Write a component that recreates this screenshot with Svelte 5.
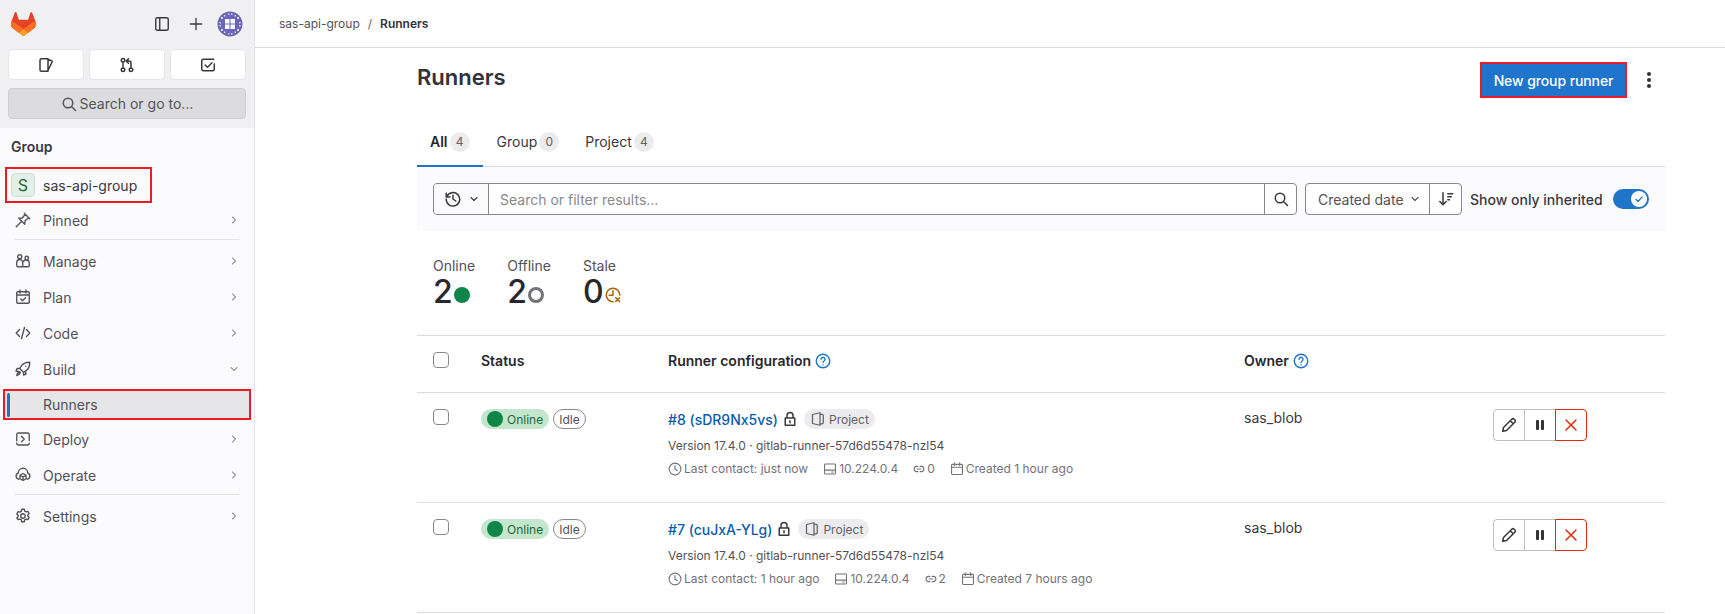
<script lang="ts">
  type Nav = { label: string; icon: string; open?: boolean };

  const icons: Record<string, string> = {
    sidebar: 'M3.25 1.75h9.5a1.5 1.5 0 0 1 1.5 1.5v9.5a1.5 1.5 0 0 1-1.5 1.5h-9.5a1.5 1.5 0 0 1-1.5-1.5v-9.5a1.5 1.5 0 0 1 1.5-1.5ZM5.75 1.75v12.500',
    plus: 'M8 1.500v13M1.500 8h13',
    issues: 'M3.5 1.75H10v12.5H3.5A1.5 1.5 0 0 1 2 12.75v-9.5a1.5 1.5 0 0 1 1.5-1.5ZM10 2.5l3.5 1.2a1 1 0 0 1 .6 1.3L10 13.5',
    mr: 'M5.75 3.25a1.75 1.75 0 1 1-3.5 0 1.75 1.75 0 0 1 3.5 0ZM5.75 12.75a1.75 1.75 0 1 1-3.5 0 1.75 1.75 0 0 1 3.5 0ZM13.75 12.75a1.75 1.75 0 1 1-3.5 0 1.75 1.75 0 0 1 3.5 0ZM4 5v6M12 11V6a2 2 0 0 0-2-2H7.5M9.5 1.75 7.25 4 9.5 6.25',
    todo: 'M14.25 7v5.25a1.5 1.5 0 0 1-1.5 1.5h-9.5a1.5 1.5 0 0 1-1.5-1.5v-8.5a1.5 1.5 0 0 1 1.5-1.5h10.5M5.25 8l2.25 2.25L12 5.75',
    search: 'M11.75 7a4.75 4.75 0 1 1-9.5 0 4.75 4.75 0 0 1 9.5 0ZM10.5 10.5l4 4',
    right: 'm6 4 4 4-4 4',
    down: 'm4 6 4 4 4-4',
    pin: 'M9.25 1.25l5.5 5.5M10.25 2.25 7.25 6 3.75 6.25l6 6 .25-3.5 3.75-3M6.5 9.5l-5.25 5.25',
    manage: 'M6.75 3.75a2 2 0 1 1-4 0 2 2 0 0 1 4 0ZM13.5 5a1.75 1.75 0 1 1-3.5 0 1.75 1.75 0 0 1 3.5 0ZM1.75 9.5a3 3 0 0 1 6 0v3.25a1 1 0 0 1-1 1h-4a1 1 0 0 1-1-1ZM7.75 10a3 3 0 0 1 3.9-2.85 3 3 0 0 1 2.6 2.85v2.75a1 1 0 0 1-1 1H7.75',
    plan: 'M2.75 2.75h10.5a1 1 0 0 1 1 1v9.5a1 1 0 0 1-1 1H2.75a1 1 0 0 1-1-1v-9.5a1 1 0 0 1 1-1ZM5 1v3M11 1v3M1.75 6h12.5M5.75 10l1.75 1.75 3-3',
    code: 'M4.5 4.5 1.25 8l3.25 3.5M11.5 4.5 14.75 8l-3.25 3.5M9.5 2.5l-3 11',
    rocket: 'M14.75 1.25C9.5 1 6.5 3.5 4.75 7.5l3.75 3.75c4-1.75 6.5-4.75 6.25-10ZM4.75 7.5H2L1 10l3 .75M8.500 11.25V14l2.500-1-.75-3M5 11c-1.500.25-3 2.25-3.25 3.500 1.250-.25 3.250-1.750 3.500-3.250M10.750 5.250h.01',
    deploy: 'M1.75 9.75v-6a1.75 1.75 0 0 1 1.75-1.75h9a1.75 1.75 0 0 1 1.75 1.75v5.75M1.75 12a2 2 0 0 0 2 2h8.75a1.75 1.75 0 0 0 1.75-1.75M6.5 5.25 9.25 8 6.5 10.75',
    operate: 'M3.75 12.25A3.25 3.25 0 0 1 3.25 6a4.75 4.75 0 0 1 9.5 0 3.25 3.25 0 0 1-.5 6.25M8 6.5l3 1.75v3.5l-3 1.75-3-1.75v-3.5ZM5 8.25l3 1.75 3-1.75M8 10v3.500',
    settings: 'M10.25 8a2.25 2.25 0 1 1-4.500 0 2.250 2.250 0 0 1 4.500 0ZM6.75 1.25h2.5l.5 1.9 1.3.75 1.9-.5 1.25 2.15-1.4 1.4v1.1l1.4 1.4-1.25 2.150-1.900-.5-1.300.750-.5 1.900h-2.500l-.5-1.900-1.300-.750-1.900.5L1.800 10l1.400-1.400V7.500L1.800 6.100 3.050 3.650l1.900.5 1.300-.75Z',
    history: 'M1.250 2.250V6h3.750M1.750 5.750A6.750 6.750 0 1 1 1.250 8M8 4.250V8l2.750 2',
    sort: 'M5 1.75v12M1.750 10.500 5 13.750l3.250-3.250M9.750 2.750h5M9.750 5.750h3.500M9.750 8.750h1.750',
    help: 'M14.75 8a6.75 6.75 0 1 1-13.500 0 6.750 6.750 0 0 1 13.500 0ZM6 6.250a2 2 0 1 1 3 1.750c-.7.4-1 .8-1 1.500M8 11.750h.01',
    lock: 'M3.250 7h9.500v7.250h-9.500ZM5 7V4.500a3 3 0 0 1 6 0V7M8 9.750v2',
    project: 'M2.500 3.500 10 1.750v12.500L2.500 12.500ZM10 3.250h2a1.250 1.250 0 0 1 1.250 1.250v7A1.250 1.250 0 0 1 12 12.750h-2',
    clock: 'M14.750 8a6.750 6.750 0 1 1-13.500 0 6.750 6.750 0 0 1 13.500 0ZM8 4v4.250l2.500 1.500',
    server: 'M2.750 2.250h10.500a1 1 0 0 1 1 1v9.500a1 1 0 0 1-1 1H2.750a1 1 0 0 1-1-1v-9.500a1 1 0 0 1 1-1ZM1.750 9.250h12.500M10 11.500h1.500',
    chain: 'M6.500 4.500H5a3.500 3.500 0 0 0 0 7h1.500M9.500 4.500H11a3.500 3.500 0 0 1 0 7H9.500M5.500 8h5',
    calendar: 'M2.750 2.750h10.500a1 1 0 0 1 1 1v9.500a1 1 0 0 1-1 1H2.750a1 1 0 0 1-1-1v-9.500a1 1 0 0 1 1-1ZM5 1v3M11 1v3M1.750 6h12.500',
    pencil: 'M10.750 2.250a1.770 1.770 0 0 1 2.500 0l.5.5a1.770 1.770 0 0 1 0 2.500L5.500 13.500l-3.750.750.750-3.750ZM9.250 3.750l3 3',
    close: 'M3 3l10 10M13 3 3 13',
    stale: 'M14.750 8A6.750 6.750 0 1 0 8 14.750M8 3.750v4.500H4.250M10.750 10.750l3.750 3.750M14.500 10.750l-3.750 3.750'
  };

  const navTop: Nav[] = [
    { label: 'Manage', icon: 'manage' },
    { label: 'Plan', icon: 'plan' },
    { label: 'Code', icon: 'code' },
    { label: 'Build', icon: 'rocket', open: true }
  ];
  const navBottom: Nav[] = [
    { label: 'Deploy', icon: 'deploy' },
    { label: 'Operate', icon: 'operate' }
  ];

  const tabs = [
    { label: 'All', count: 4, active: true },
    { label: 'Group', count: 0 },
    { label: 'Project', count: 4 }
  ];

  const runners = [
    { id: '#8 (sDR9Nx5vs)', contact: 'just now', jobs: 0, created: '1 hour ago' },
    { id: '#7 (cuJxA-YLg)', contact: '1 hour ago', jobs: 2, created: '7 hours ago' }
  ];
</script>

{#snippet icon(name: string, size = 16, sw = 1.5)}
  <svg class="ic" width={size} height={size} viewBox="0 0 16 16" fill="none" stroke="currentColor" stroke-width={sw} stroke-linecap="round" stroke-linejoin="round">
    <path d={icons[name]} />
  </svg>
{/snippet}

{#snippet navItem(item: Nav)}
  <div class="nav-item">
    <span class="nav-icon">{@render icon(item.icon, 16, 1.35)}</span>
    <span class="nav-label">{item.label}</span>
    <span class="chev">{@render icon(item.open ? 'down' : 'right', 12, 1.4)}</span>
  </div>
{/snippet}

<div class="page">
  <aside class="sidebar">
    <div class="side-head">
      <div class="logo-row">
        <svg width="25" height="24" viewBox="0 0 25 24">
          <path d="m24.507 9.5-.034-.09L21.082.562a.896.896 0 0 0-1.694.091l-2.29 7.01H7.825L5.535.653a.898.898 0 0 0-1.694-.09L.451 9.411.416 9.5a6.297 6.297 0 0 0 2.09 7.278l.012.01.03.022 5.16 3.867 2.56 1.935 1.554 1.176a1.051 1.051 0 0 0 1.268 0l1.555-1.176 2.56-1.935 5.197-3.89.014-.01A6.297 6.297 0 0 0 24.507 9.5Z" fill="#E24329"/>
          <path d="m24.507 9.5-.034-.09a11.44 11.44 0 0 0-4.56 2.051l-7.447 5.632 4.742 3.584 5.197-3.89.014-.01A6.297 6.297 0 0 0 24.507 9.5Z" fill="#FC6D26"/>
          <path d="m7.707 20.677 2.56 1.935 1.555 1.176a1.051 1.051 0 0 0 1.268 0l1.555-1.176 2.56-1.935-4.743-3.584-4.755 3.584Z" fill="#FCA326"/>
          <path d="M5.01 11.461a11.43 11.43 0 0 0-4.56-2.05L.416 9.5a6.297 6.297 0 0 0 2.09 7.278l.012.01.03.022 5.16 3.867 4.745-3.584-7.444-5.632Z" fill="#FC6D26"/>
        </svg>
        <div class="head-actions">
          {@render icon('sidebar', 16, 1.4)}
          <span class="head-plus">{@render icon('plus', 14, 1.5)}</span>
          <svg width="26" height="26" viewBox="0 0 26 26">
            <circle cx="13" cy="13" r="12.500" fill="#6a67b8"/>
            <path d="M8 8h4.500v4.500H8zM13.500 8H18v4.500h-4.500zM8 13.500h4.500V18H8zM13.500 13.500H18V18h-4.500z" fill="#fff"/>
            <path d="M4 6h2v2H4zM20 6h2v2h-2zM4 18h2v2H4zM20 18h2v2h-2zM11 2.500h1.500V4H11zM14 2.500h1.500V4H14zM11 22h1.500v1.500H11zM14 22h1.500v1.500H14zM2.500 11H4v1.500H2.500zM2.500 14H4v1.500H2.500zM22 11h1.500v1.500H22zM22 14h1.500v1.500H22zM7 4h1.500v1.500H7zM17.500 4H19v1.500h-1.500zM7 20.500h1.500V22H7zM17.500 20.500H19V22h-1.500z" fill="#d9d8ef"/>
          </svg>
        </div>
      </div>
      <div class="quick">
        <button class="quick-btn">{@render icon('issues')}</button>
        <button class="quick-btn">{@render icon('mr')}</button>
        <button class="quick-btn">{@render icon('todo')}</button>
      </div>
      <button class="search-btn">{@render icon('search')}<span>Search or go to…</span></button>
    </div>

    <div class="side-body">
      <div class="ctx-title">Group</div>
      <div class="ctx-box">
        <span class="ctx-avatar">S</span>
        <span>sas-api-group</span>
      </div>
      {@render navItem({ label: 'Pinned', icon: 'pin' })}
      <hr class="side-rule" />
      {#each navTop as item}
        {@render navItem(item)}
      {/each}
      <div class="nav-active"><span class="nav-bar"></span><span>Runners</span></div>
      {#each navBottom as item}
        {@render navItem(item)}
      {/each}
      <hr class="side-rule" />
      {@render navItem({ label: 'Settings', icon: 'settings' })}
    </div>
  </aside>

  <main class="main">
    <header class="topbar">
      <span>sas-api-group</span><span class="sep">/</span><strong>Runners</strong>
    </header>

    <div class="content">
      <div class="title-row">
        <h1>Runners</h1>
        <div class="title-actions">
          <button class="primary">New group runner</button>
          <span class="kebab"><i></i><i></i><i></i></span>
        </div>
      </div>

      <div class="tabs">
        {#each tabs as t}
          <div class="tab" class:active={t.active}>{t.label}<span class="tab-count">{t.count}</span></div>
        {/each}
      </div>

      <div class="filter-band">
        <div class="filter-input">
          <span class="hist">{@render icon('history')}{@render icon('down', 12)}</span>
          <span class="placeholder">Search or filter results...</span>
          <span class="go">{@render icon('search')}</span>
        </div>
        <div class="sorter">
          <span class="sort-field">Created date {@render icon('down', 12)}</span>
          <span class="sort-dir">{@render icon('sort')}</span>
        </div>
        <span class="inherit">Show only inherited</span>
        <span class="toggle"><span class="knob">
          <svg width="10" height="10" viewBox="0 0 16 16" fill="none" stroke="#1f75cb" stroke-width="2" stroke-linecap="round" stroke-linejoin="round"><path d="m3 8.500 3.500 3.500L13 4.500"/></svg>
        </span></span>
      </div>

      <div class="stats">
        <div class="stat"><span class="stat-label">Online</span><span class="stat-val">2<span class="dot-on"></span></span></div>
        <div class="stat"><span class="stat-label">Offline</span><span class="stat-val">2<span class="ring"></span></span></div>
        <div class="stat"><span class="stat-label">Stale</span><span class="stat-val">0<span class="stale">{@render icon('stale')}</span></span></div>
      </div>

      <div class="row head">
        <span class="cell-check"><span class="check"></span></span>
        <span>Status</span>
        <span class="th-help">Runner configuration <span class="help">{@render icon('help', 16, 1.4)}</span></span>
        <span class="th-help">Owner <span class="help">{@render icon('help', 16, 1.4)}</span></span>
        <span></span>
      </div>

      {#each runners as r}
        <div class="row runner">
          <span class="cell-check"><span class="check"></span></span>
          <div class="badges">
            <span class="b-online"><span class="b-dot"></span>Online</span>
            <span class="b-idle">Idle</span>
          </div>
          <div class="config">
            <div class="cfg-title">
              <a href="#top" class="cfg-link">{r.id}</a>
              <span class="cfg-lock">{@render icon('lock')}</span>
              <span class="b-project">{@render icon('project', 16, 1.25)}Project</span>
            </div>
            <div class="cfg-meta">Version 17.4.0 · gitlab-runner-57d6d55478-nzl54</div>
            <div class="cfg-foot">
              <span>{@render icon('clock', 14, 1.25)}Last contact: {r.contact}</span>
              <span>{@render icon('server', 14, 1.25)}10.224.0.4</span>
              <span>{@render icon('chain', 12, 1.4)}{r.jobs}</span>
              <span>{@render icon('calendar', 14, 1.25)}Created {r.created}</span>
            </div>
          </div>
          <div class="owner">sas_blob</div>
          <div class="btns">
            <span class="act">{@render icon('pencil')}</span>
            <span class="act"><span class="pause"><i></i><i></i></span></span>
            <span class="act danger">{@render icon('close', 16, 1.5)}</span>
          </div>
        </div>
      {/each}
    </div>
  </main>
</div>

<style>
  :global(body) { margin: 0; background: #fff; }
  .page { display: grid; grid-template-columns: 255px 1fr; height: 614px; overflow: hidden; font: 400 14px Inter, 'Noto Sans', sans-serif; color: #3a383f; }
  .ic { display: block; flex: none; }

  .sidebar { display: flex; flex-direction: column; background: #fbfafd; border-right: 1px solid #e4e4e8; box-sizing: border-box; }
  .side-head { background: #f0f0f3; padding: 12px 8px 9px; height: 128px; box-sizing: border-box; }
  .logo-row { display: flex; justify-content: space-between; align-items: center; height: 24px; padding: 0 3px 0 3px; }
  .head-actions { display: flex; align-items: center; gap: 14px; }
  .head-plus { margin: 0 0 0 5px; }
  .quick { display: grid; grid-template-columns: repeat(3, 76px); gap: 5px; margin-top: 13px; }
  .quick-btn { display: flex; align-items: center; justify-content: center; height: 31px; padding: 0; background: #fff; border: 1px solid #e6e6ea; border-radius: 4px; color: #3a383f; }
  .search-btn { display: flex; align-items: center; justify-content: center; gap: 3px; width: 238px; height: 31px; margin-top: 8px; padding: 0; background: #dcdcde; border: 1px solid #cfcfd3; border-radius: 4px; font: inherit; color: #55535a; box-sizing: border-box; }

  .ctx-title { font-weight: 600; padding: 10px 11px 0; height: 39px; box-sizing: border-box; line-height: 17px; }
  .ctx-box { display: flex; align-items: center; gap: 8px; height: 32px; width: 139px; margin: 0 0 -1px 5px; padding-left: 4px; border: 2px solid #ed1c24; }
  .ctx-avatar { display: flex; align-items: center; justify-content: center; width: 24px; height: 24px; box-sizing: border-box; background: #e3f0e7; border: 1px solid #c9e0d0; border-radius: 4px; color: #24663b; font-size: 16px; }
  .nav-item { display: grid; grid-template-columns: 28px 1fr 14px; align-items: center; height: 36px; padding: 0 12px 0 15px; box-sizing: border-box; color: #535158; }
  .chev { color: #77757c; }
  .side-rule { border: 0; border-top: 1px solid #e4e4e8; margin: 1px 15px 3px; height: 0; }
  .nav-active { display: flex; align-items: center; height: 27px; margin: 2px 3px 1px; border: 2px solid #ed1c24; background: #e6e6e8; color: #535158; padding-left: 2px; width: 242px; }
  .nav-bar { width: 3px; height: 24px; background: #1f75cb; border-radius: 2px; margin-right: 33px; }

  .main { min-width: 0; }
  .topbar { display: flex; align-items: center; gap: 8px; height: 48px; padding-left: 24px; font-size: 12px; border-bottom: 1px solid #dcdcde; box-sizing: border-box; color: #535158; }
  .topbar strong { color: #333238; font-weight: 600; }
  .sep { color: #626168; }
  .content { width: 1248px; margin-left: 162px; }

  .title-row { display: flex; justify-content: space-between; align-items: flex-start; height: 72px; padding-top: 14px; box-sizing: border-box; }
  h1 { margin: 0; font-size: 22px; font-weight: 600; color: #333238; line-height: 30px; }
  .title-actions { display: flex; align-items: center; gap: 20px; margin-right: 14px; }
  .primary { width: 147px; height: 36px; padding: 0; background: #1f75cb; color: #fff; border: 2px solid #ed1c24; font: 500 14px Inter, sans-serif; letter-spacing: -0.1px; box-sizing: border-box; }
  .kebab { display: flex; flex-direction: column; gap: 2px; width: 4px; }
  .kebab i { width: 4px; height: 4px; background: #333238; border-radius: 50%; }

  .tabs { display: flex; height: 47px; border-bottom: 1px solid #dcdcde; box-sizing: border-box; }
  .tab { display: flex; align-items: center; gap: 2px; padding: 0 13px 4px; height: 47px; box-sizing: border-box; color: #3a383f; }
  .tab.active { font-weight: 600; color: #28272d; border-bottom: 2px solid #1f75cb; padding-bottom: 2px; margin-right: 1px; }
  .tab-count { display: flex; align-items: center; justify-content: center; min-width: 20px; height: 20px; border-radius: 10px; background: #ececef; color: #626168; font-size: 12px; font-weight: 400; }

  .filter-band { display: flex; align-items: center; height: 64px; padding-left: 16px; background: #fbfafd; }
  .filter-input { display: flex; align-items: stretch; width: 864px; height: 32px; border: 1px solid #89888d; border-radius: 4px; box-sizing: border-box; background: #fff; }
  .hist { display: flex; align-items: center; gap: 7px; width: 55px; padding-left: 11px; box-sizing: border-box; border-right: 1px solid #89888d; background: #fbfafd; border-radius: 4px 0 0 4px; }
  .placeholder { flex: 1; display: flex; align-items: center; padding-left: 11px; color: #89888d; }
  .go { display: flex; align-items: center; justify-content: center; width: 31px; border-left: 1px solid #89888d; }
  .sorter { display: flex; height: 32px; width: 157px; margin-left: 8px; border: 1px solid #89888d; border-radius: 4px; box-sizing: border-box; background: #fff; }
  .sort-field { flex: 1; display: flex; align-items: center; gap: 5px; padding-left: 12px; color: #535158; }
  .sort-dir { display: flex; align-items: center; justify-content: center; width: 31px; border-left: 1px solid #89888d; }
  .inherit { margin-left: 8px; font-weight: 500; color: #3a383f; }
  .toggle { display: flex; align-items: center; justify-content: flex-end; width: 36px; height: 20px; margin-left: 10px; padding-right: 2px; box-sizing: border-box; background: #1f75cb; border-radius: 10px; }
  .knob { display: flex; align-items: center; justify-content: center; width: 16px; height: 16px; background: #fff; border-radius: 50%; }

  .stats { display: flex; height: 105px; padding: 26px 0 0 16px; box-sizing: border-box; border-bottom: 1px solid #dcdcde; }
  .stat { display: flex; flex-direction: column; margin-right: 32px; }
  .stat-label { line-height: 17px; color: #535158; }
  .stat-val { display: flex; align-items: center; gap: 1px; margin-top: 2px; font-size: 32px; font-weight: 500; line-height: 32px; color: #28272d; }
  .dot-on { width: 16px; height: 16px; background: #108548; border-radius: 50%; margin-top: 5px; }
  .ring { width: 16px; height: 16px; border: 3px solid #737278; border-radius: 50%; box-sizing: border-box; margin-top: 5px; }
  .stale { color: #ab6100; margin-top: 5px; }

  .row { display: grid; grid-template-columns: 64px 187px 576px 249px 1fr; border-bottom: 1px solid #dcdcde; box-sizing: border-box; }
  .cell-check { padding-left: 16px; }
  .check { display: block; width: 16px; height: 16px; border: 1px solid #89888d; border-radius: 4px; box-sizing: border-box; background: #fff; }
  .head { height: 57px; padding-top: 16px; font-weight: 600; color: #28272d; line-height: 17px; }
  .th-help { display: flex; align-items: center; height: 17px; gap: 4px; }
  .help { color: #1f75cb; }

  .runner { height: 110px; padding-top: 16px; }
  .badges { display: flex; align-items: flex-start; gap: 4px; }
  .b-online { display: flex; align-items: center; gap: 4px; height: 20px; padding: 0 6px 0 6px; background: #c3e6cd; color: #24663b; border-radius: 10px; font-size: 12px; }
  .b-dot { width: 16px; height: 16px; background: #108548; border-radius: 50%; }
  .b-idle { display: flex; align-items: center; height: 20px; padding: 0 5px; border: 1px solid #89888d; border-radius: 10px; box-sizing: border-box; font-size: 12px; color: #535158; }
  .cfg-title { display: flex; align-items: center; height: 20px; gap: 4px; }
  .cfg-link { color: #0b5cad; font-weight: 500; text-decoration: none; }
  .b-project { display: flex; align-items: center; gap: 3px; height: 20px; padding: 0 6px; margin-left: 2px; background: #ececef; color: #626168; border-radius: 10px; font-size: 12px; }
  .cfg-meta { margin-top: 9px; font-size: 12px; line-height: 16px; color: #535158; }
  .cfg-foot { display: flex; gap: 15px; margin-top: 7px; font-size: 12px; line-height: 16px; color: #737278; }
  .cfg-foot span { display: flex; align-items: center; gap: 2px; }
  .owner { line-height: 17px; color: #3a383f; }
  .btns { display: flex; height: 32px; }
  .act { display: flex; align-items: center; justify-content: center; width: 32px; height: 32px; margin-right: -1px; border: 1px solid #bfbfc3; box-sizing: border-box; background: #fff; color: #3a383f; }
  .act:first-child { border-radius: 4px 0 0 4px; }
  .act.danger { border-color: #dd2b0e; color: #dd2b0e; border-radius: 0 4px 4px 0; position: relative; }
  .pause { display: flex; gap: 2px; }
  .pause i { width: 3px; height: 10px; background: #333238; border-radius: 1px; }
</style>
